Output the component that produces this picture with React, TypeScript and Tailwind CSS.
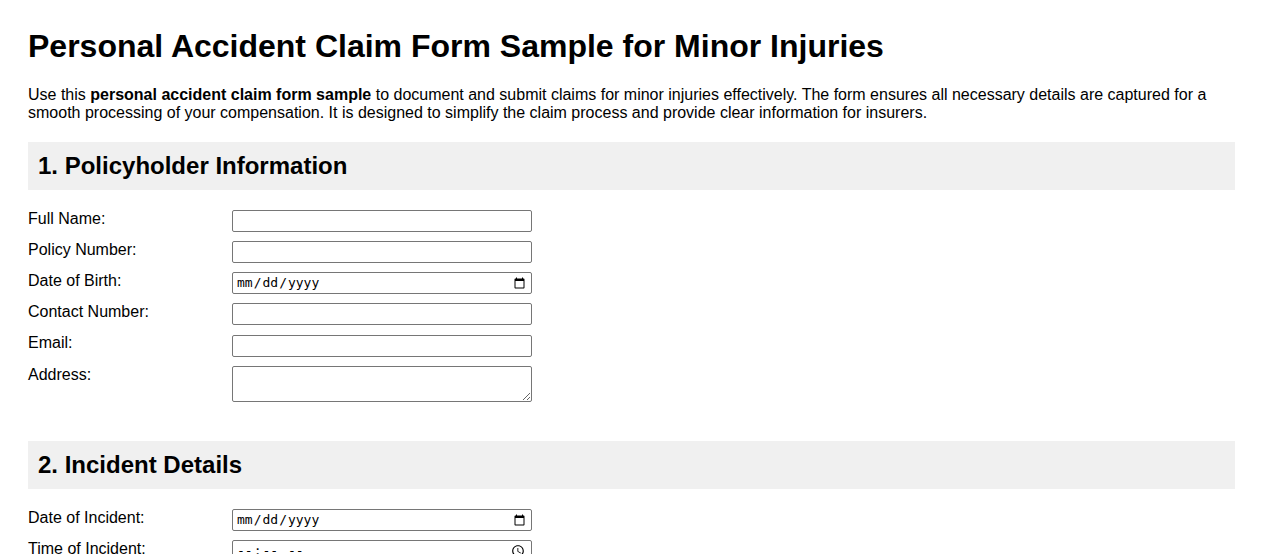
import React from "react";

const inputCls =
  "w-[300px] h-[22px] border border-[#767676] rounded-[2px] px-[3px] text-[13px] bg-white text-black";
const monoStyleCls = "font-['DejaVu_Sans_Mono',monospace]";

function Row({ label, children }: { label: string; children: React.ReactNode }) {
  return (
    <div className="flex items-start mb-[9px]">
      <label className="w-[204px] shrink-0 text-[16px] leading-[18px]">{label}</label>
      {children}
    </div>
  );
}

export default function App() {
  return (
    <div className="font-['Liberation_Sans',Arial,sans-serif] text-black bg-white px-[28px] pt-[28px] pb-[40px]">
      <h1 className="text-[32px] leading-[37px] font-bold">
        Personal Accident Claim Form Sample for Minor Injuries
      </h1>
      <p className="mt-[21px] text-[16px] leading-[18px]">
        Use this <b>personal accident claim form sample</b> to document and submit claims for minor injuries
        effectively. The form ensures all necessary details are captured for a smooth processing of your
        compensation. It is designed to simplify the claim process and provide clear information for insurers.
      </p>

      <section className="mt-[20px]">
        <h2 className="bg-[#f0f0f0] px-[10px] py-[10px] text-[24px] leading-[28px] font-bold">
          1. Policyholder Information
        </h2>
        <div className="mt-[20px]">
          <Row label="Full Name:">
            <input type="text" className={inputCls} />
          </Row>
          <Row label="Policy Number:">
            <input type="text" className={inputCls} />
          </Row>
          <Row label="Date of Birth:">
            <input type="date" className={`${inputCls} ${monoStyleCls}`} />
          </Row>
          <Row label="Contact Number:">
            <input type="tel" className={inputCls} />
          </Row>
          <Row label="Email:">
            <input type="email" className={`${inputCls} mt-[1px]`} />
          </Row>
          <Row label="Address:">
            <textarea className="w-[300px] h-[36px] border border-[#767676] rounded-[2px] px-[3px] text-[13px] bg-white block" />
          </Row>
        </div>
      </section>

      <section className="mt-[39px]">
        <h2 className="bg-[#f0f0f0] px-[10px] py-[10px] text-[24px] leading-[28px] font-bold">
          2. Incident Details
        </h2>
        <div className="mt-[20px]">
          <Row label="Date of Incident:">
            <input type="date" className={`${inputCls} ${monoStyleCls}`} />
          </Row>
          <Row label="Time of Incident:">
            <input type="time" className={`${inputCls} ${monoStyleCls}`} />
          </Row>
          <Row label="Location of Incident:">
            <input type="text" className={inputCls} />
          </Row>
          <Row label="Description of Injury:">
            <textarea className="w-[300px] h-[36px] border border-[#767676] rounded-[2px] px-[3px] text-[13px] bg-white block" />
          </Row>
        </div>
      </section>
    </div>
  );
}
